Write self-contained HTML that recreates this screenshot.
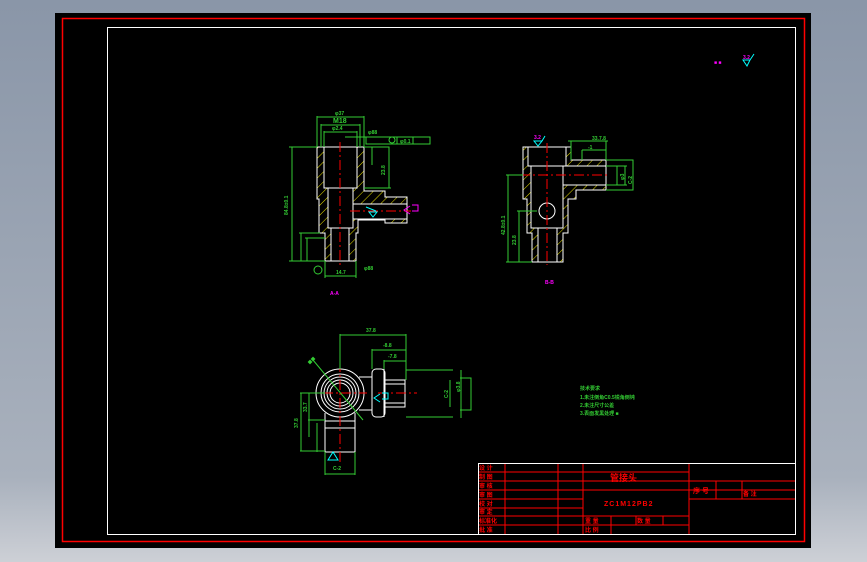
<!DOCTYPE html>
<html><head><meta charset="utf-8"><style>
html,body{margin:0;padding:0;width:867px;height:562px;overflow:hidden;background:linear-gradient(#8a96a8,#a9b1bd 85%,#cdd0d6);}
svg{display:block}
text{font-family:"Liberation Sans","Noto Sans CJK SC",sans-serif;font-weight:bold}
</style></head><body>
<svg width="867" height="562" viewBox="0 0 867 562" xmlns="http://www.w3.org/2000/svg">
<defs>
<pattern id="h" width="7" height="7" patternUnits="userSpaceOnUse" patternTransform="rotate(45)">
<rect width="7" height="7" fill="#000"/><line x1="0" y1="0" x2="0" y2="7" stroke="#e8e000" stroke-width="1"/>
</pattern>
</defs>
<rect x="55" y="13" width="756" height="535" fill="#000"/>
<rect x="62.5" y="18.5" width="742" height="523" fill="none" stroke="#f00" stroke-width="1.5"/>
<rect x="107.5" y="27.5" width="688" height="507" fill="none" stroke="#fff" stroke-width="1"/>

<!-- View 1 -->
<g stroke="#fff" stroke-width="1">
<path d="M317 147 H364 V191 H385 V197 H407 V223 H385 V220 H358 V233 H356 V261 H325 V233 H319 V199 H317 Z" fill="url(#h)"/>
<rect x="324" y="147" width="33" height="41" fill="#000"/>
<rect x="328" y="188" width="25" height="40" fill="#000"/>
<rect x="331" y="228" width="18" height="33" fill="#000"/>
<rect x="353" y="204" width="54" height="15" fill="#000"/>
</g>
<g stroke="#f00" stroke-width="1" stroke-dasharray="10,3,2,3">
<line x1="340" y1="142" x2="340" y2="266"/><line x1="350" y1="211" x2="411" y2="211"/>
</g>
<g stroke="#3c3" stroke-width="1" fill="none">
<path d="M292 147 V261 M289 147 H317 M289 261 H325 M317 116 V147 M364 116 V147 M317 117 H364 M321 124 V147 M360 124 V147 M321 125 H360 M324 131 V147 M357 131 V147 M324 132 H357 M364 147 H389 V188 M364 188 H391 M372 147 V165 M301 233 V261 M299 233 H320 M307 238 V261 M305 238 H325 M325 261 V278 M356 261 V278 M325 276 H356 M366 137 H430 V144 H366 Z M397 137 V144 M413 137 V144 M345 137 H366"/>
<circle cx="318" cy="270" r="4"/><circle cx="392" cy="140" r="3"/>
</g>
<g fill="#3c3" font-size="5">
<text x="335" y="115">φ37</text><text x="333" y="123" font-size="7">M18</text><text x="332" y="130">φ2.4</text>
<text x="368" y="134">φ88</text><text x="400" y="143">φ0.1</text>
<text x="288" y="215" transform="rotate(-90 288 215)">84.8±0.1</text>
<text x="385" y="175" transform="rotate(-90 385 175)">23.8</text>
<text x="336" y="274">14.7</text><text x="364" y="270">φ88</text>
</g>
<text x="330" y="295" fill="#f0f" font-size="5">A-A</text>
<path d="M366 207 L376 211 M369 212 h8 l-4 5 z" stroke="#0ff" fill="none"/>
<path d="M410 206 l-6 4 l6 4 M412 205 h6 v6 h-6" stroke="#f0f" fill="none"/>

<!-- View 2 -->
<g stroke="#fff" stroke-width="1">
<path d="M523 147 H571 V160 H606 V190 H576 V199 H568 V233 H563 V262 H532 V233 H527 V199 H523 Z" fill="url(#h)"/>
<rect x="528" y="147" width="38" height="19" fill="#000"/>
<rect x="531" y="166" width="32" height="62" fill="#000"/>
<rect x="538" y="228" width="19" height="34" fill="#000"/>
<rect x="563" y="166" width="43" height="19" fill="#000"/>
<circle cx="547" cy="211" r="8" fill="#000"/>
</g>
<g stroke="#f00" stroke-width="1" stroke-dasharray="10,3,2,3">
<line x1="547" y1="143" x2="547" y2="265"/><line x1="520" y1="175" x2="610" y2="175"/>
</g>
<g stroke="#3c3" stroke-width="1" fill="none">
<path d="M508 175 V262 M506 175 H523 M506 262 H532 M519 211 V262 M517 211 H537 M571 141 V160 M606 141 V160 M568 141 H608 M582 150 V160 M582 150 H606 M606 160 H633 V190 H606 M625 166 V185 M617 166 V185 M606 166 H627 M606 185 H627"/>
</g>
<g fill="#3c3" font-size="5">
<text x="505" y="235" transform="rotate(-90 505 235)">42.8±0.1</text>
<text x="516" y="245" transform="rotate(-90 516 245)">23.8</text>
<text x="592" y="140">33.7.8</text><text x="588" y="149">-1</text>
<text x="632" y="184" transform="rotate(-90 632 184)">C-2</text>
<text x="624" y="180" transform="rotate(-90 624 180)">φ3</text>
</g>
<text x="545" y="284" fill="#f0f" font-size="5">B-B</text>
<path d="M534 141 h8 l-4 5 z M542 141 l3 -5" stroke="#0ff" fill="none"/>
<text x="534" y="139" fill="#f0f" font-size="5">3.2</text>

<!-- View 3 -->
<g stroke="#fff" stroke-width="1" fill="none">
<circle cx="340" cy="393" r="24"/><circle cx="340" cy="393" r="19"/><circle cx="340" cy="393" r="16"/><circle cx="340" cy="393" r="13"/><circle cx="340" cy="393" r="10"/>
<path d="M325 413 V421 H355 V413 M325 421 V428 H355 V421"/>
<rect x="325" y="428" width="30" height="24"/>
<path d="M359 377 H372 M359 410 H372"/>
<rect x="372" y="369" width="13" height="48" rx="4"/><line x1="384" y1="369" x2="384" y2="417"/>
<rect x="385" y="380" width="20" height="27"/><line x1="385" y1="384" x2="405" y2="384"/><line x1="385" y1="403" x2="405" y2="403"/>
</g>
<g stroke="#f00" stroke-width="1" stroke-dasharray="10,3,2,3">
<line x1="340" y1="362" x2="340" y2="462"/><line x1="305" y1="393" x2="367" y2="393"/><line x1="378" y1="393" x2="417" y2="393"/>
</g>
<g stroke="#3c3" stroke-width="1" fill="none">
<path d="M340 334 V369 M406 334 V380 M340 335 H406 M372 349 V369 M372 350 H406 M384 360 V369 M384 361 H406 M406 370 H453 M406 417 H453 M450 380 V407 M461 370 V418 M460 378 H471 V410 H460 M300 393 H325 M300 451 H325 M301 393 V451 M309 393 V437 M308 420 H325 M317 423 V452 M325 452 V475 M355 452 V475 M325 474 H355 M313 360 L363 420"/>
</g>
<g fill="#3c3" font-size="5">
<text x="366" y="332">37.8</text><text x="383" y="347">-8.8</text><text x="388" y="358">-7.8</text>
<text x="298" y="428" transform="rotate(-90 298 428)">37.8</text>
<text x="307" y="412" transform="rotate(-90 307 412)">33.7</text>
<text x="333" y="470">C-2</text>
<text x="448" y="398" transform="rotate(-90 448 398)">C-2</text>
<text x="460" y="392" transform="rotate(-90 460 392)">φ3.8</text>
</g>
<text x="310" y="365" fill="#3c3" font-size="7" transform="rotate(-45 310 365)">■■</text>
<path d="M328 460 l5 -8 l5 8 z" stroke="#0ff" fill="none"/>
<path d="M380 394 l-6 4 l6 4 M382 393 h6 v6 h-6" stroke="#0ff" fill="none"/>

<!-- notes -->
<g fill="#3c3" font-size="5">
<text x="580" y="390">技术要求</text>
<text x="580" y="399">1.未注倒角C0.5锐角倒钝</text>
<text x="580" y="407">2.未注尺寸公差</text>
<text x="580" y="415">3.表面发黑处理   ■</text>
</g>

<!-- top right -->
<text x="714" y="64" fill="#f0f" font-size="5">■ ■</text>
<text x="743" y="59" fill="#f0f" font-size="5">3.2</text>
<path d="M743 60 h7 l-3 6 z M750 60 l4 -6" stroke="#0ff" fill="none"/>

<!-- title block -->
<g stroke="#f00" stroke-width="1" fill="none">
<path d="M478 472 H689 M478 481 H796 M478 490 H796 M478 499 H583 M689 499 H796 M478 508 H583 M478 516 H689 M478 525 H689"/>
<path d="M505 463 V535 M558 463 V535 M583 463 V535 M689 463 V535 M716 481 V499 M742 481 V499 M611 516 V535 M636 516 V525 M663 516 V525 M583 490 H689"/>
</g>
<rect x="478.5" y="463.5" width="317" height="71" fill="none" stroke="#fff"/>
<g fill="#f00" font-size="6">
<text x="479" y="470">设 计</text><text x="479" y="479">制 图</text><text x="479" y="488">审 核</text><text x="479" y="497">审 图</text>
<text x="479" y="506">校 对</text><text x="479" y="514">审 定</text><text x="479" y="523">标准化</text><text x="479" y="532">批 准</text>
<text x="610" y="481" font-size="9">管接头</text>
<text x="604" y="506" font-size="7" letter-spacing="1">ZC1M12PB2</text>
<text x="693" y="493" font-size="7">序 号</text>
<text x="743" y="496">备  注</text>
<text x="585" y="523">重  量</text><text x="637" y="523">数  量</text>
<text x="585" y="532">比  例</text>
</g>
</svg>
</body></html>
